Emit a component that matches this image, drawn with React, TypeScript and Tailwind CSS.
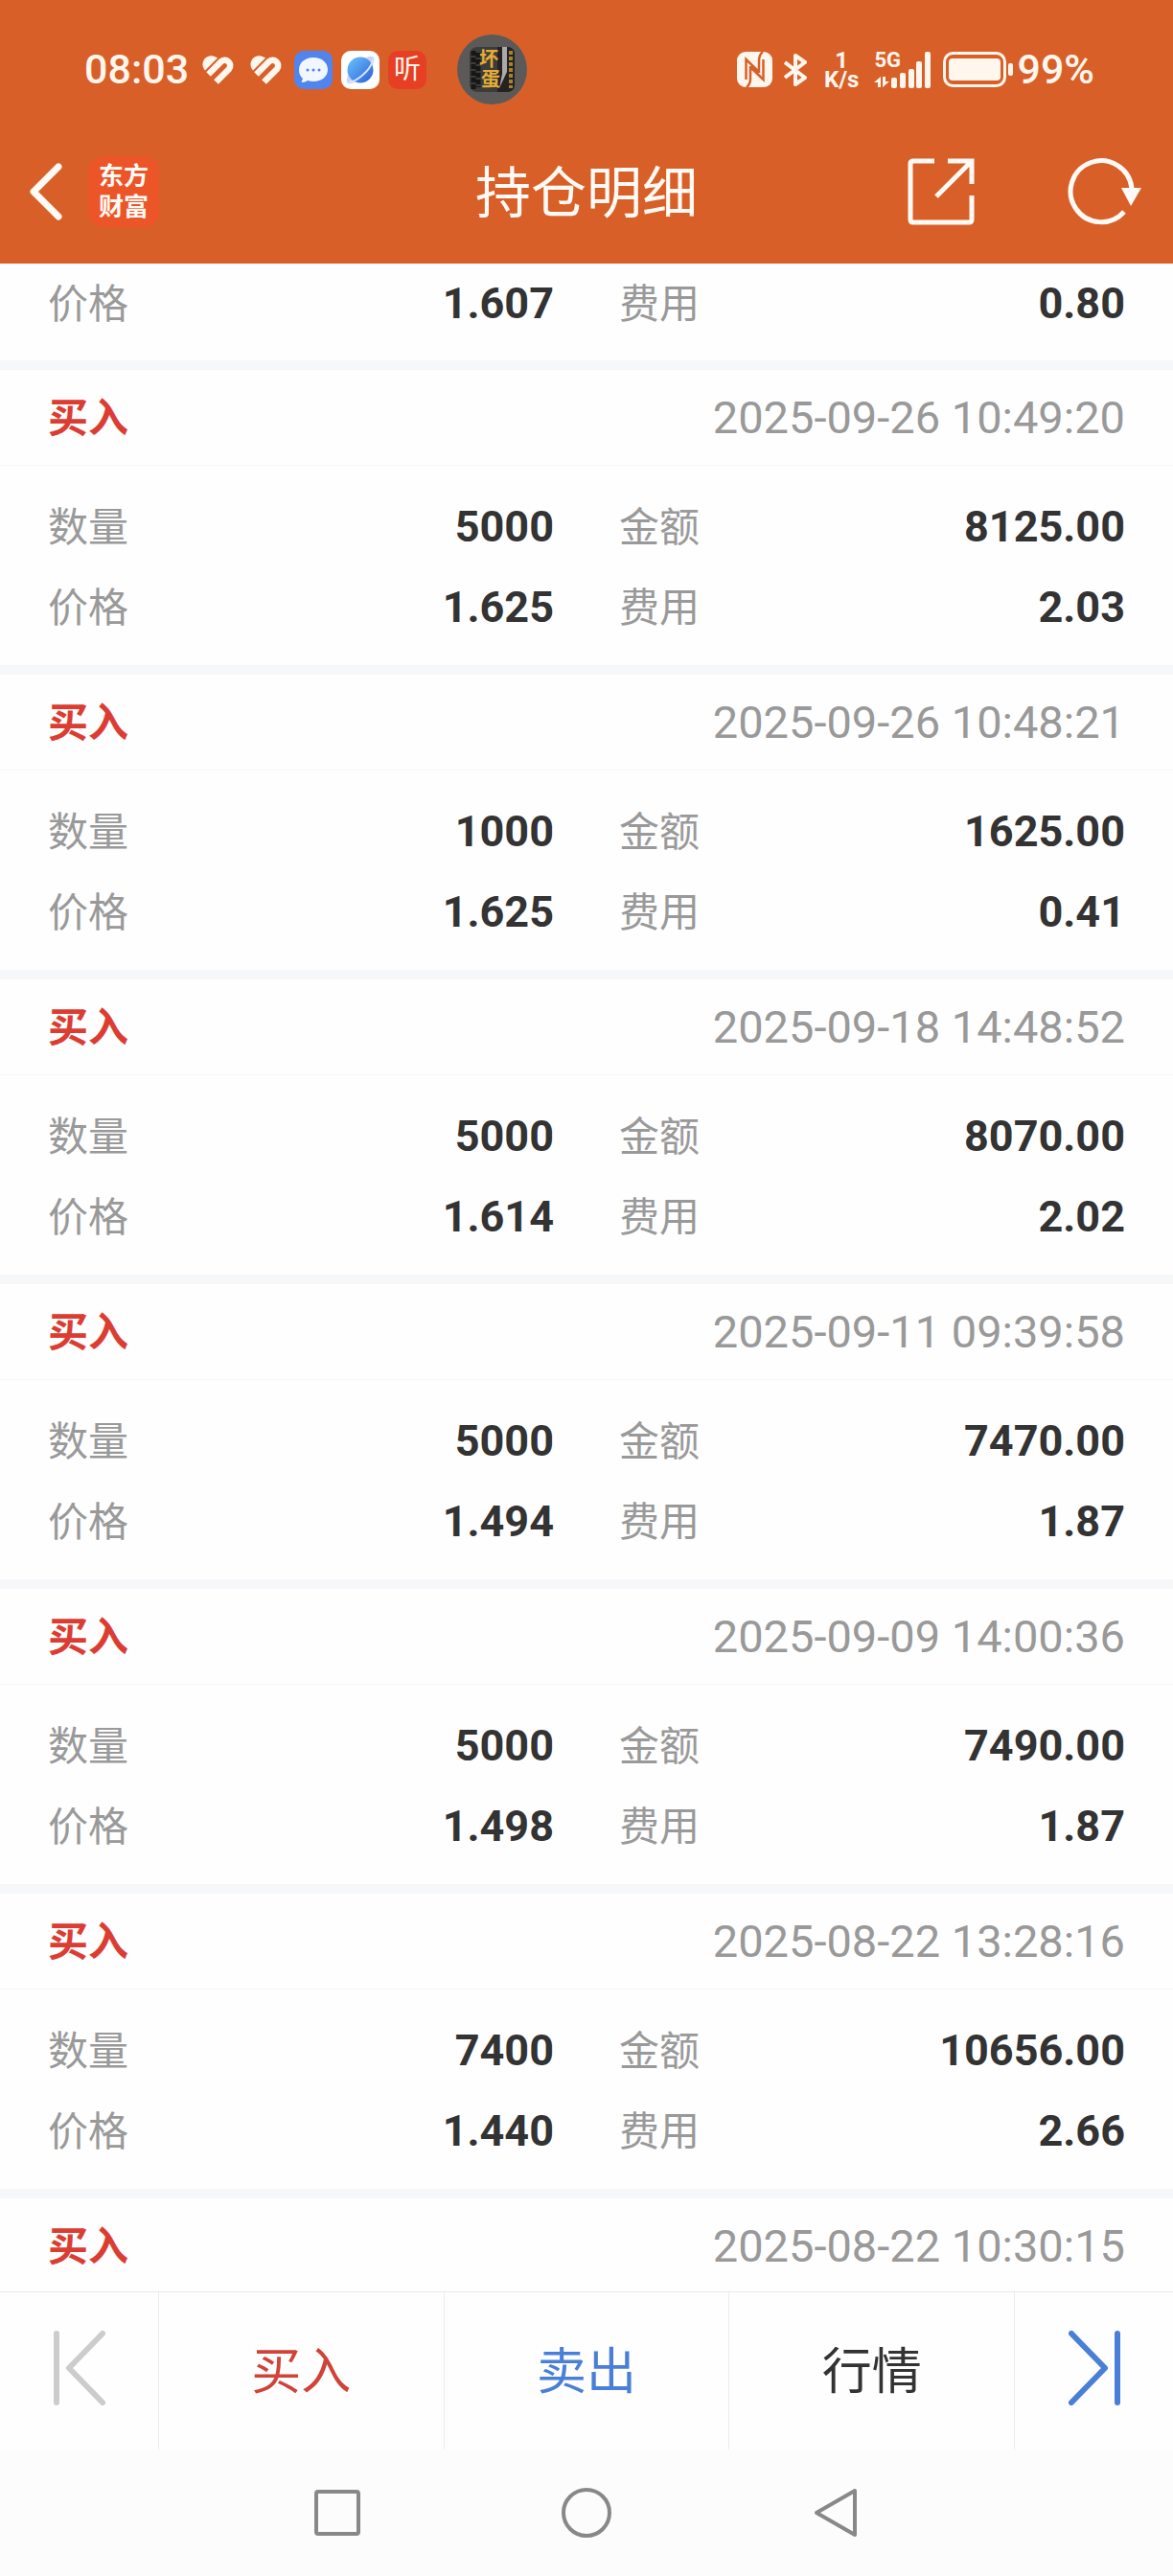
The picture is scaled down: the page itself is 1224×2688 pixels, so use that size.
import type { ReactNode } from "react";

interface Trade {
  time: string;
  amount: string;
  total: string;
  price: string;
  fee: string;
}

const trades: Trade[] = [
  { time: "2025-09-26 10:49:20", amount: "5000", total: "8125.00", price: "1.625", fee: "2.03" },
  { time: "2025-09-26 10:48:21", amount: "1000", total: "1625.00", price: "1.625", fee: "0.41" },
  { time: "2025-09-18 14:48:52", amount: "5000", total: "8070.00", price: "1.614", fee: "2.02" },
  { time: "2025-09-11 09:39:58", amount: "5000", total: "7470.00", price: "1.494", fee: "1.87" },
  { time: "2025-09-09 14:00:36", amount: "5000", total: "7490.00", price: "1.498", fee: "1.87" },
  { time: "2025-08-22 13:28:16", amount: "7400", total: "10656.00", price: "1.440", fee: "2.66" },
];

function HeartIcon() {
  return (
    <svg width="34" height="30" viewBox="0 0 34 30" fill="none">
      <path d="M3 15.500C-1 11 0 5 4 2C8-1 13 0 16 2.500Z" fill="#fff6ee" />
      <path d="M6.500 19.500L20 6A5.700 5.700 0 0 1 28 14L14.500 27.500" stroke="#fff6ee" strokeWidth="6.500" />
    </svg>
  );
}

function ChatIcon() {
  return (
    <svg width="40" height="40" viewBox="0 0 40 40">
      <rect width="40" height="40" rx="10" fill="#5084ee" />
      <path
        d="M20 7C11 7 5 12.500 5 20c0 4 1.500 7 4 9l-1.500 4c3 0 5-1 6.500-2 2 .7 4 1 6 1 9 0 15-5.500 15-12.500S29 7 20 7Z"
        fill="#f1f6ff"
      />
      <circle cx="14" cy="20" r="1.500" fill="#4f80ee" />
      <circle cx="20" cy="20" r="1.500" fill="#4f80ee" />
      <circle cx="26" cy="20" r="1.500" fill="#4f80ee" />
    </svg>
  );
}

function BrowserIcon() {
  return (
    <svg width="40" height="40" viewBox="0 0 40 40">
      <defs>
        <linearGradient id="globe" x1="0" y1="0" x2="1" y2="1">
          <stop offset="0" stopColor="#6cc4fb" />
          <stop offset="1" stopColor="#2b5fd9" />
        </linearGradient>
      </defs>
      <rect width="40" height="40" rx="10" fill="#fff" />
      <ellipse cx="20" cy="20" rx="19" ry="7" transform="rotate(-45 20 20)" fill="#c9d6f7" />
      <circle cx="20" cy="20" r="13.500" fill="url(#globe)" />
      <path d="M8 33C14 33 30 22 33 10" fill="none" stroke="#d4e4ff" strokeWidth="2" />
    </svg>
  );
}

function NfcIcon() {
  return (
    <svg width="37" height="37" viewBox="0 0 37 37">
      <rect width="37" height="37" rx="9" fill="#fff6ee" />
      <path
        d="M9.500 29V8L23 21M27.500 8V29L14 16M23 22V10Q23 3 27 0M14 15V28Q14 34 10 37"
        fill="none"
        stroke="#d86028"
        strokeWidth="2.500"
      />
    </svg>
  );
}

function BluetoothIcon() {
  return (
    <svg width="24" height="36" viewBox="0 0 24 36" fill="none" stroke="#fff6ee" strokeWidth="4">
      <path d="M1 10L22 26L12 33V3L22 10L1 26" strokeLinejoin="round" />
    </svg>
  );
}

function SignalIcon() {
  return (
    <svg width="60" height="38" viewBox="0 0 60 38" fill="#fff6ee">
      <path d="M0 32L7 26V37H4V32ZM9 26H12V31H16L9 37Z" />
      <rect x="18" y="27" width="6" height="11" rx="2" />
      <rect x="27" y="22" width="6" height="16" rx="2" />
      <rect x="36" y="18" width="6" height="20" rx="2" />
      <rect x="44" y="10" width="6" height="28" rx="2" />
      <rect x="53" y="0" width="6" height="38" rx="2" />
    </svg>
  );
}

function BatteryIcon() {
  return (
    <svg width="73" height="37" viewBox="0 0 73 37">
      <rect x="1.500" y="1.500" width="63" height="34" rx="9" fill="none" stroke="#fff6ee" strokeWidth="3" />
      <rect x="6" y="7" width="54" height="23" rx="4" fill="#fff6ee" />
      <rect x="68" y="12" width="5" height="13" rx="2" fill="#fff6ee" />
    </svg>
  );
}

// Book cover of the track that is playing
function CoverIcon() {
  return (
    <svg
      width="47"
      height="47"
      viewBox="0 0 47 47"
      fontFamily="'Noto Sans CJK SC', sans-serif"
      fontWeight="700"
    >
      <rect width="47" height="47" rx="8" fill="#3d3c3b" />
      <path d="M29 0H39Q47 0 47 8V39Q47 47 39 47H29Z" fill="#242322" />
      <path d="M34 0H39V26L31 43L34 28Z" fill="#aaa" />
      <path d="M4 4V44M9 6V42" stroke="#171717" strokeWidth="5" strokeDasharray="5 2" />
      <path d="M43 4V43" stroke="#a8812f" strokeWidth="4" strokeDasharray="4 2" />
      <text x="10" y="20" fontSize="20" fill="#e3ad36">
        坏
      </text>
      <text x="12" y="41" fontSize="20" fill="#e3ad36">
        蛋
      </text>
    </svg>
  );
}

function StatusBar() {
  return (
    <div className="flex h-[145px] items-center justify-between pr-[82px] pl-[88px] text-[43px] leading-none font-medium text-[#fff6ee]">
      <div className="flex items-center">
        <span>08:03</span>
        <div className="ml-[14px] flex items-center gap-4">
          <HeartIcon />
          <HeartIcon />
        </div>
        <div className="ml-3 flex items-center gap-[9px]">
          <ChatIcon />
          <BrowserIcon />
          <div className="flex size-10 items-center justify-center rounded-[10px] bg-[#e63f23] text-[28px] font-normal">
            听
          </div>
        </div>
        <div className="ml-8 flex size-[73px] items-center justify-center rounded-full bg-[#5c5a59]">
          <CoverIcon />
        </div>
      </div>
      <div className="flex items-center">
        <NfcIcon />
        <div className="ml-3">
          <BluetoothIcon />
        </div>
        <div className="ml-[18px] flex flex-col items-center text-[24px] leading-5 font-bold">
          <span>1</span>
          <span>K/s</span>
        </div>
        <div className="relative ml-4">
          <SignalIcon />
          <span className="absolute top-0 left-0 text-[22px] leading-[18px] font-bold">5G</span>
        </div>
        <div className="ml-3">
          <BatteryIcon />
        </div>
        <span className="ml-1">99%</span>
      </div>
    </div>
  );
}

function TitleBar() {
  return (
    <div className="grid h-[110px] grid-cols-[1fr_auto_1fr] items-center px-[30px]">
      <div className="flex items-center gap-[27px]">
        <button aria-label="返回">
          <svg width="35" height="60" viewBox="0 0 35 60" fill="none" stroke="#fffaf5" strokeWidth="7">
            <path d="M31 4L5 30L31 56" strokeLinecap="round" strokeLinejoin="round" />
          </svg>
        </button>
        <div className="flex size-[74px] flex-col items-center justify-center rounded-2xl bg-[#ec5528] text-[26px] leading-8 font-bold text-[#fffaf5]">
          <span>东方</span>
          <span>财富</span>
        </div>
      </div>
      <h1 className="pt-1 text-[58px] leading-none text-[#fffaf5]">持仓明细</h1>
      <div className="flex items-center justify-end gap-24">
        <button aria-label="分享">
          <svg width="70" height="70" viewBox="0 0 70 70" fill="none" stroke="#fffaf5" strokeWidth="5">
            <path d="M28 3H6Q3 3 3 6V64Q3 67 6 67H64Q67 67 67 64V39M42 3H67V27M67 3L30 40" />
          </svg>
        </button>
        <button aria-label="刷新">
          <svg width="81" height="70" viewBox="0 0 81 70" fill="none">
            <path d="M60 56A32 32 0 1 1 68 32" stroke="#fffaf5" strokeWidth="5" />
            <path d="M57 31H78L67 50Z" fill="#fffaf5" />
          </svg>
        </button>
      </div>
    </div>
  );
}

function Field(props: { label: string; value: string }) {
  return (
    <div className="flex h-[84px] items-center justify-between">
      <dt className="text-[42px] text-[#999]">{props.label}</dt>
      <dd className="text-[45px] font-bold text-[#333]">{props.value}</dd>
    </div>
  );
}

function TradeHeader(props: { time: string }) {
  return (
    <div className="flex h-[100px] items-center justify-between border-b border-[#f5f6f8] px-[50px] pt-0.5">
      <h2 className="text-[42px] font-bold text-[#db3d33]">买入</h2>
      <time className="text-[47px] text-[#999]">{props.time}</time>
    </div>
  );
}

function TradeCard(props: { trade: Trade }) {
  const { trade } = props;
  return (
    <li className="border-t-10 border-[#f6f7f9]">
      <TradeHeader time={trade.time} />
      <dl className="grid grid-cols-2 gap-x-[68px] px-[50px] pt-[22px] pb-[18px]">
        <Field label="数量" value={trade.amount} />
        <Field label="金额" value={trade.total} />
        <Field label="价格" value={trade.price} />
        <Field label="费用" value={trade.fee} />
      </dl>
    </li>
  );
}

function Tab(props: { className: string; children: ReactNode }) {
  return (
    <button className={"flex-1 border-l border-[#ececec] pt-1 text-[52px] " + props.className}>
      {props.children}
    </button>
  );
}

function BottomBar() {
  return (
    <div className="flex h-[165px] shrink-0 border-t border-[#e8e8e8]">
      <button aria-label="上一个" className="flex w-[165px] items-center justify-center pb-1.5">
        <svg width="54" height="78" viewBox="0 0 54 78" fill="none" stroke="#ccc" strokeWidth="6">
          <path d="M3 3V75M51 3L16 39L51 75" strokeLinecap="round" strokeLinejoin="round" />
        </svg>
      </button>
      <Tab className="text-[#d14239]">买入</Tab>
      <Tab className="text-[#4a7fd8]">卖出</Tab>
      <Tab className="text-[#333]">行情</Tab>
      <button
        aria-label="下一个"
        className="flex w-[166px] items-center justify-center border-l border-[#ececec] pb-1.5"
      >
        <svg width="54" height="78" viewBox="0 0 54 78" fill="none" stroke="#4a7fd8" strokeWidth="6">
          <path d="M51 3V75M3 3L38 39L3 75" strokeLinecap="round" strokeLinejoin="round" />
        </svg>
      </button>
    </div>
  );
}

function SystemNav() {
  return (
    <nav className="flex h-[132px] shrink-0 justify-center bg-[#fcfcfc]">
      <button aria-label="最近任务" className="flex w-[260px] items-center justify-center">
        <svg width="48" height="48" viewBox="0 0 48 48" fill="none" stroke="#888" strokeWidth="4">
          <rect x="2" y="2" width="44" height="44" rx="2" />
        </svg>
      </button>
      <button aria-label="主屏幕" className="flex w-[260px] items-center justify-center">
        <svg width="52" height="52" viewBox="0 0 52 52" fill="none" stroke="#888" strokeWidth="4">
          <circle cx="26" cy="26" r="24" />
        </svg>
      </button>
      <button aria-label="返回上一级" className="flex w-[260px] items-center justify-center">
        <svg width="46" height="52" viewBox="0 0 46 52" fill="none" stroke="#888" strokeWidth="4">
          <path d="M43 3V49L3 26Z" strokeLinejoin="round" />
        </svg>
      </button>
    </nav>
  );
}

export default function App() {
  return (
    <div className="flex h-screen flex-col bg-[#fefefe] font-['Roboto','Noto_Sans_CJK_SC',sans-serif]">
      <header className="shrink-0 bg-[#d86028] pb-5">
        <StatusBar />
        <TitleBar />
      </header>
      <main className="flex-1 overflow-hidden">
        <dl className="grid h-[101px] grid-cols-2 gap-x-[68px] px-[50px] pb-5">
          <Field label="价格" value="1.607" />
          <Field label="费用" value="0.80" />
        </dl>
        <ul>
          {trades.map((trade) => (
            <TradeCard key={trade.time} trade={trade} />
          ))}
          <li className="border-t-10 border-[#f6f7f9]">
            <TradeHeader time="2025-08-22 10:30:15" />
          </li>
        </ul>
      </main>
      <BottomBar />
      <SystemNav />
    </div>
  );
}
